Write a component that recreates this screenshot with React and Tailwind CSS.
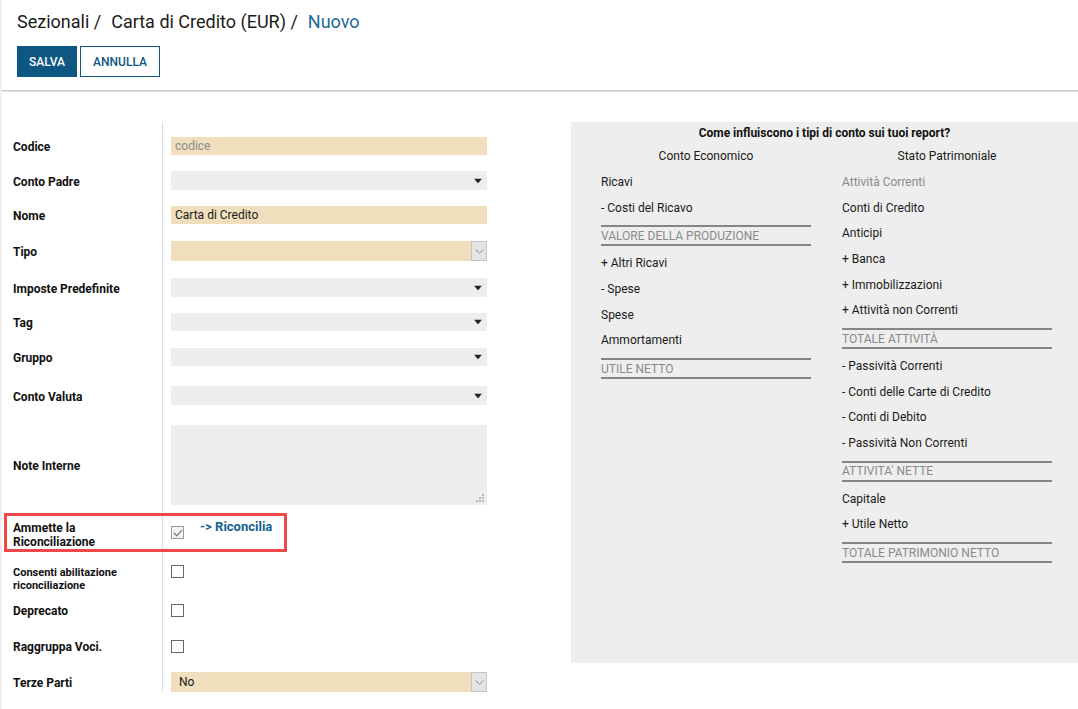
import React from "react";

const WHEAT = "bg-[#efdfbd]";

function Caret() {
  return (
    <svg className="absolute right-[5px] top-1/2 -translate-y-1/2" width="8" height="5" viewBox="0 0 8 5">
      <path d="M0 0 L8 0 L4 5 Z" fill="#222" />
    </svg>
  );
}

function DropBtn() {
  return (
    <div className="absolute right-0 top-0 h-full w-[16px] bg-[#e4e4e4] border border-[#c4c4c4] flex items-center justify-center">
      <svg width="9" height="5" viewBox="0 0 9 5">
        <path d="M0.5 0.5 L4.5 4.2 L8.5 0.5" fill="none" stroke="#8a8a8a" strokeWidth="1" />
      </svg>
    </div>
  );
}

function Check({ checked }) {
  if (checked) {
    return (
      <div className="w-[13px] h-[13px] border border-[#9a9a9a] bg-[#f3f3f3] flex items-center justify-center">
        <svg width="10" height="8" viewBox="0 0 10 8">
          <path d="M1 4 L3.8 6.8 L9 1.2" fill="none" stroke="#7a7a7a" strokeWidth="1.2" />
        </svg>
      </div>
    );
  }
  return <div className="w-[13px] h-[13px] border border-[#666] bg-white" />;
}

function Row({ label, pad, h, children, small, overlay }) {
  return (
    <div className="flex relative">
      {overlay}
      <div className={`w-[160px] pl-[11px] ${pad}`}>
        <div className={`${h} flex items-center font-bold text-[#111] ${small ? "text-[11px] leading-[13px]" : "text-[12px] leading-[14px]"}`}>
          <div className={small ? "translate-y-[2px]" : "translate-y-[1px]"}>{label}</div>
        </div>
      </div>
      <div className={`border-l border-[#dddddd] pl-[8px] ${pad}`}>
        <div className={`${h} w-[316px] relative`}>{children}</div>
      </div>
    </div>
  );
}

function Item({ children, muted }) {
  return <div className={`h-[25.7px] flex items-center text-[12px] ${muted ? "text-[#8a8a8a]" : "text-[#1a1a1a]"}`}>{children}</div>;
}

function Total({ children }) {
  return (
    <div className="mt-[5px] mb-[4px] border-t-2 border-b-2 border-[#858585] h-[21px] flex items-center text-[12px] text-[#8a8a8a]">
      {children}
    </div>
  );
}

export default function App() {
  return (
    <div className="min-h-[709px] bg-white border-l-2 border-[#eeeeee] font-['Roboto',sans-serif]">
      <div className="pl-[15px] pt-[10px]">
        <div className="h-[22px] flex items-center text-[18px] text-[#1b1b1b]">
          <span>Sezionali /</span>
          <span className="ml-[10px]">Carta di Credito (EUR) /</span>
          <span className="ml-[10px] text-[#1b6a98]">Nuovo</span>
        </div>
        <div className="flex gap-[3px] mt-[14px]">
          <button className="h-[31px] w-[60px] bg-[#0d5782] text-white text-[12px] font-medium">SALVA</button>
          <button className="h-[31px] w-[80px] border border-[#0d5782] text-[#0d5782] text-[12px] font-medium bg-white">ANNULLA</button>
        </div>
      </div>
      <div className="mt-[13px] h-[1px] bg-[#c8c8c8]" />
      <div className="h-[1px] bg-[#e6e6e6]" />

      <div className="flex pt-[30px]">
        <div className="w-[569px] pb-[3px]">
          <Row label="Codice" pad="pt-[15px]" h="h-[18px]">
            <div className={`h-full ${WHEAT} pl-[4px] flex items-center text-[12px] text-[#8c8c8c]`}>codice</div>
          </Row>
          <Row label="Conto Padre" pad="pt-[16px]" h="h-[19px]">
            <div className="h-full bg-[#eeeeee] relative"><Caret /></div>
          </Row>
          <Row label="Nome" pad="pt-[16px]" h="h-[18px]">
            <div className={`h-full ${WHEAT} pl-[4px] flex items-center text-[12px] text-[#1a1a1a]`}>Carta di Credito</div>
          </Row>
          <Row label="Tipo" pad="pt-[17px]" h="h-[20px]">
            <div className={`h-full ${WHEAT} relative`}><DropBtn /></div>
          </Row>
          <Row label="Imposte Predefinite" pad="pt-[17px]" h="h-[19px]">
            <div className="h-full bg-[#eeeeee] relative"><Caret /></div>
          </Row>
          <Row label="Tag" pad="pt-[16px]" h="h-[18px]">
            <div className="h-full bg-[#eeeeee] relative"><Caret /></div>
          </Row>
          <Row label="Gruppo" pad="pt-[17px]" h="h-[18px]">
            <div className="h-full bg-[#eeeeee] relative"><Caret /></div>
          </Row>
          <Row label="Conto Valuta" pad="pt-[20px]" h="h-[19px]">
            <div className="h-full bg-[#eeeeee] relative"><Caret /></div>
          </Row>
          <Row label="Note Interne" pad="pt-[20px]" h="h-[80px]">
            <div className="h-full bg-[#eeeeee] relative">
              <svg className="absolute right-[3px] bottom-[3px]" width="8" height="8" viewBox="0 0 8 8">
                <rect x="6" y="0" width="2" height="2" fill="#b5b5b5" />
                <rect x="3" y="3" width="2" height="2" fill="#b5b5b5" />
                <rect x="6" y="3" width="2" height="2" fill="#b5b5b5" />
                <rect x="0" y="6" width="2" height="2" fill="#b5b5b5" />
                <rect x="3" y="6" width="2" height="2" fill="#b5b5b5" />
                <rect x="6" y="6" width="2" height="2" fill="#b5b5b5" />
              </svg>
            </div>
          </Row>
          <Row
            label={<span className="block translate-y-[1px]">Ammette la<br />Riconciliazione</span>}
            pad="pt-[8px]"
            h="h-[39px]"
            overlay={<div className="absolute left-[2px] top-[8px] w-[283px] h-[39px] border-[3px] border-[#ef4848] pointer-events-none" />}
          >
            <div className="h-full flex items-start">
              <div className="pt-[13px]"><Check checked /></div>
              <a className="ml-[16px] pt-[6px] text-[13px] leading-[15px] font-bold text-[#15608e]">-&gt; Riconcilia</a>
            </div>
          </Row>
          <Row label={<span>Consenti abilitazione<br />riconciliazione</span>} small pad="pt-[11px]" h="h-[27px]">
            <div className="h-full flex items-start pt-[2px]"><Check /></div>
          </Row>
          <Row label="Deprecato" pad="pt-[10px]" h="h-[20px]">
            <div className="h-full flex items-center"><Check /></div>
          </Row>
          <Row label="Raggruppa Voci." pad="pt-[16px]" h="h-[20px]">
            <div className="h-full flex items-center"><Check /></div>
          </Row>
          <Row label="Terze Parti" pad="pt-[16px]" h="h-[20px]">
            <div className={`h-full ${WHEAT} relative pl-[8px] flex items-center text-[12px] text-[#1a1a1a]`}>
              No
              <DropBtn />
            </div>
          </Row>
        </div>

        <div className="flex-1 h-[541px] bg-[#eeeeee] pl-[30px]">
          <div className="h-[20px] flex items-center justify-center text-[12px] font-bold text-[#111] pr-[30px] pt-[1px]">
            Come influiscono i tipi di conto sui tuoi report?
          </div>
          <div className="grid grid-cols-[210px_210px] gap-x-[31px]">
            <div>
              <div className="h-[27px] flex items-center justify-center text-[12px] text-[#1a1a1a]">Conto Economico</div>
              <Item>Ricavi</Item>
              <Item>- Costi del Ricavo</Item>
              <Total>VALORE DELLA PRODUZIONE</Total>
              <Item>+ Altri Ricavi</Item>
              <Item>- Spese</Item>
              <Item>Spese</Item>
              <Item>Ammortamenti</Item>
              <Total>UTILE NETTO</Total>
            </div>
            <div>
              <div className="h-[27px] flex items-center justify-center text-[12px] text-[#1a1a1a]">Stato Patrimoniale</div>
              <Item muted>Attività Correnti</Item>
              <Item>Conti di Credito</Item>
              <Item>Anticipi</Item>
              <Item>+ Banca</Item>
              <Item>+ Immobilizzazioni</Item>
              <Item>+ Attività non Correnti</Item>
              <Total>TOTALE ATTIVITÀ</Total>
              <Item>- Passività Correnti</Item>
              <Item>- Conti delle Carte di Credito</Item>
              <Item>- Conti di Debito</Item>
              <Item>- Passività Non Correnti</Item>
              <Total>ATTIVITA' NETTE</Total>
              <Item>Capitale</Item>
              <Item>+ Utile Netto</Item>
              <Total>TOTALE PATRIMONIO NETTO</Total>
            </div>
          </div>
        </div>
      </div>
    </div>
  );
}
